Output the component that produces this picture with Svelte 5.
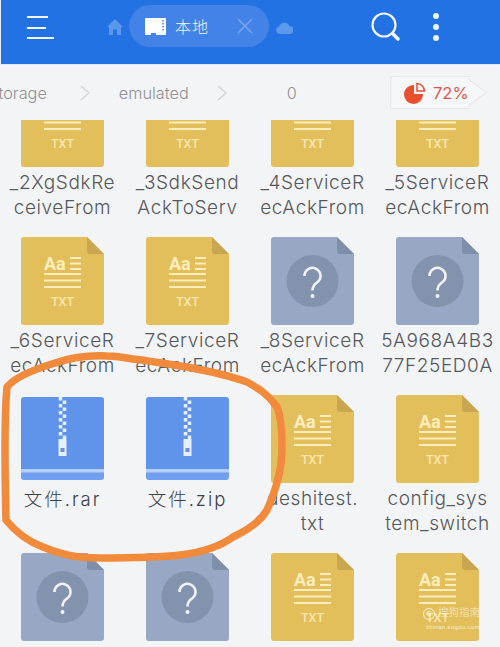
<script>
	const crumbs = ['storage', 'emulated', '0'];

	const rows = [
		[
			{ kind: 'txt', lines: ['_2XgSdkRe', 'ceiveFrom'] },
			{ kind: 'txt', lines: ['_3SdkSend', 'AckToServ'] },
			{ kind: 'txt', lines: ['_4ServiceR', 'ecAckFrom'] },
			{ kind: 'txt', lines: ['_5ServiceR', 'ecAckFrom'] }
		],
		[
			{ kind: 'txt', lines: ['_6ServiceR', 'ecAckFrom'] },
			{ kind: 'txt', lines: ['_7ServiceR', 'ecAckFrom'] },
			{ kind: 'unknown', lines: ['_8ServiceR', 'ecAckFrom'] },
			{ kind: 'unknown', lines: ['5A968A4B3', '77F25ED0A'] }
		],
		[
			{ kind: 'zip', lines: ['文件.rar'] },
			{ kind: 'zip', lines: ['文件.zip'] },
			{ kind: 'txt', lines: ['deshitest.', 'txt'] },
			{ kind: 'txt', lines: ['config_sys', 'tem_switch'] }
		],
		[
			{ kind: 'unknown', lines: [] },
			{ kind: 'unknown', lines: [] },
			{ kind: 'txt', lines: [] },
			{ kind: 'txt', lines: [] }
		]
	];
	const files = rows.flat();
</script>

{#snippet txtIcon()}
	<svg class="file-icon" viewBox="0 0 83 88" aria-hidden="true">
		<path d="M3 0H66L83 17V85a3 3 0 0 1-3 3H3a3 3 0 0 1-3-3V3a3 3 0 0 1 3-3Z" fill="#e3bf5c" />
		<path d="M66 0L83 17H69a3 3 0 0 1-3-3Z" fill="#c9a650" />
		<text x="23" y="33" class="aa">Aa</text>
		<path d="M49 21H60M49 26.500H60M49 32H60M23 37H60M23 43.500H60M23 50H60" stroke="#fbeebc" stroke-width="1.800" />
		<text x="41.500" y="69" class="txt">TXT</text>
	</svg>
{/snippet}

{#snippet unknownIcon()}
	<svg class="file-icon" viewBox="0 0 83 88" aria-hidden="true">
		<path d="M3 0H66L83 17V85a3 3 0 0 1-3 3H3a3 3 0 0 1-3-3V3a3 3 0 0 1 3-3Z" fill="#98a8c4" />
		<path d="M66 0L83 17H69a3 3 0 0 1-3-3Z" fill="#7f8fa9" />
		<circle cx="41.500" cy="44" r="26" fill="#8393ae" />
		<path d="M33.500 39a8 8 0 1 1 12.500 6.500c-3 2-4.500 3.500-4.500 8" fill="none" stroke="#f0f3f8" stroke-width="2.600" />
		<circle cx="41.500" cy="59" r="2" fill="#f0f3f8" />
	</svg>
{/snippet}

{#snippet zipIcon()}
	<svg class="file-icon zip-icon" viewBox="0 0 83 83" aria-hidden="true">
		<path d="M3 0H80a3 3 0 0 1 3 3V73H0V3a3 3 0 0 1 3-3Z" fill="#6093ea" />
		<path d="M0 73H83V80a3 3 0 0 1-3 3H3a3 3 0 0 1-3-3Z" fill="#6f9fee" />
		<rect x="0" y="72" width="83" height="3.500" fill="#b5d0f8" />
		<path d="M39.500 0V42" stroke="#e6effd" stroke-width="3.500" stroke-dasharray="3.500 3.500" />
		<path d="M43.500 3.500V42" stroke="#e6effd" stroke-width="3.500" stroke-dasharray="3.500 3.500" />
		<rect x="37.500" y="42" width="8" height="17" fill="#e6effd" />
		<rect x="39.500" y="51" width="4" height="4" fill="#6f8fd0" />
	</svg>
{/snippet}

<div class="screen">
	<header class="topbar">
		<svg class="menu" viewBox="0 0 28 24" aria-hidden="true">
			<path d="M1 2H22M1 13H20M1 23H28" stroke="#f2f6fe" stroke-width="2" />
		</svg>
		<svg class="home" viewBox="0 0 16 16" aria-hidden="true">
			<path d="M8 0L16 8H14V16H10V10.500H6V16H2V8H0Z" fill="#5c98ec" />
		</svg>
		<div class="tab">
			<svg class="sd" viewBox="0 0 21 17" aria-hidden="true">
				<path d="M1 0H20a1 1 0 0 1 1 1V16a1 1 0 0 1-1 1H11V15H6V17H1a1 1 0 0 1-1-1V1a1 1 0 0 1 1-1Z" fill="#fff" />
				<path d="M18 2V14" stroke="#4382e6" stroke-width="1.500" stroke-dasharray="1.500 1.500" />
			</svg>
			<span class="tab-label">本地</span>
			<svg class="close" viewBox="0 0 16 16" aria-hidden="true">
				<path d="M1 1L15 15M15 1L1 15" stroke="#77a5ef" stroke-width="1.500" />
			</svg>
		</div>
		<svg class="cloud" viewBox="0 0 17 13" aria-hidden="true">
			<path d="M4 13a3.800 3.800 0 0 1-.8-7.500A5.500 5.500 0 0 1 13.500 5a4 4 0 0 1-.2 8Z" fill="#5c98ec" />
		</svg>
		<svg class="search" viewBox="0 0 30 30" aria-hidden="true">
			<circle cx="13" cy="13" r="11.500" fill="none" stroke="#f2f6fe" stroke-width="2.200" />
			<path d="M21.500 21.500L27 27" stroke="#f2f6fe" stroke-width="3.500" stroke-linecap="round" />
		</svg>
		<div class="dots"><i></i><i></i><i></i></div>
	</header>

	<nav class="pathbar">
		<div class="crumbs">
			{#each crumbs as crumb, i}
				{#if i > 0}
					<svg class="chevron" viewBox="0 0 10 16" aria-hidden="true">
						<path d="M1 1L9 8L1 15" fill="none" stroke="#d4d6d9" stroke-width="1.500" />
					</svg>
				{/if}
				<span class="crumb">{crumb}</span>
			{/each}
		</div>
		<div class="usage">
			<svg class="pie" viewBox="0 0 22 22" aria-hidden="true">
				<path d="M10 3V12H19A9.500 9.500 0 1 1 10 3Z" fill="#e8502f" />
				<path d="M13 1.500A8 8 0 0 1 20.500 9H13Z" fill="none" stroke="#e8502f" stroke-width="1.500" />
			</svg>
			<span>72%</span>
		</div>
	</nav>

	<main class="files">
		<div class="grid">
			{#each files as file}
				<div class="tile">
					{#if file.kind === 'txt'}
						{@render txtIcon()}
					{:else if file.kind === 'zip'}
						{@render zipIcon()}
					{:else}
						{@render unknownIcon()}
					{/if}
					<div class="label" class:zip={file.kind === 'zip'}>
						{#each file.lines as line}
							<div>{line}</div>
						{/each}
					</div>
				</div>
			{/each}
		</div>

		<div class="watermark">
			<span class="wm-top"><b>S</b>搜狗指南</span>
			<span class="wm-url">zhinan.sogou.com</span>
		</div>
	</main>

	<svg class="scribble" viewBox="0 0 500 647" aria-hidden="true">
		<path
			d="M107 356C85 355 70 358 55 363C35 369 15 377 7 387C4 420 5 480 6 520C18 535 32 543 43 547C60 554 75 558 100 558C130 558 155 558 180 555C205 552 222 545 233 537C248 530 260 522 267 510C276 490 282 470 282 448C282 430 281 417 277 407C268 394 258 388 247 382C228 375 208 371 187 367C165 364 145 360 133 359C122 357 115 356 107 356Z"
			fill="none"
			stroke="#f28a3c"
			stroke-width="7.500"
			stroke-linejoin="round"
		/>
	</svg>
</div>

<style>
	:global(body) {
		margin: 0;
		background: #f3f4f6;
	}

	.screen {
		position: relative;
		width: 500px;
		height: 647px;
		overflow: hidden;
		font-family: "Inter", "Noto Sans CJK SC", sans-serif;
	}

	.topbar {
		display: flex;
		align-items: center;
		height: 65px;
		padding-left: 26px;
		box-sizing: border-box;
		background: #2272e4;
		border-left: 1px solid #e8eef8;
		border-bottom: 1px solid #dce8f6;
	}

	.menu {
		width: 28px;
		height: 24px;
		margin: -11px 0 0 -1px;
	}

	.home {
		width: 16px;
		height: 16px;
		margin: -10px 0 0 53px;
	}

	.tab {
		display: flex;
		align-items: center;
		width: 140px;
		height: 42px;
		margin: -12px 0 0 6px;
		padding-left: 16px;
		box-sizing: border-box;
		border-radius: 21px;
		background: #4382e6;
	}

	.sd {
		width: 21px;
		height: 17px;
	}

	.tab-label {
		margin-left: 9px;
		font-size: 16px;
		letter-spacing: 1px;
		color: #f4f7fd;
		font-family: "Noto Sans CJK SC", sans-serif;
		font-weight: 300;
	}

	.close {
		width: 16px;
		height: 16px;
		margin-left: 28px;
	}

	.cloud {
		width: 17px;
		height: 13px;
		margin: -10px 0 0 7px;
	}

	.search {
		width: 30px;
		height: 30px;
		margin: -11px 0 0 78px;
	}

	.dots {
		display: flex;
		flex-direction: column;
		gap: 5px;
		margin: -11px 0 0 32px;
	}

	.dots i {
		display: block;
		width: 6px;
		height: 6px;
		border-radius: 50%;
		background: #eef4fd;
	}

	.pathbar {
		display: flex;
		align-items: center;
		justify-content: space-between;
		height: 55px;
		padding-right: 30px;
		overflow: hidden;
		background: #f3f4f6;
	}

	.crumbs {
		display: flex;
		align-items: center;
		margin-left: -10px;
		font-size: 16.300px;
		font-weight: 300;
		color: #8f9193;
	}

	.chevron {
		width: 10px;
		height: 16px;
		margin: 0 29px 0 33px;
	}

	.crumbs .chevron:nth-of-type(2) {
		margin-left: 28px;
	}

	.crumbs .crumb:last-child {
		margin-left: 31px;
	}

	.usage {
		display: flex;
		align-items: center;
		gap: 7px;
		position: relative;
		width: 80px;
		height: 33px;
		padding-left: 13px;
		box-sizing: border-box;
		border: 1px solid #e6e7e9;
		border-right: 0;
		border-radius: 3px 0 0 3px;
		font-size: 16.500px;
		color: #d6574a;
		background: #f6f7f8;
	}

	.usage::after {
		content: '';
		position: absolute;
		right: -10px;
		top: 4px;
		width: 22px;
		height: 22px;
		transform: rotate(45deg) skew(-8deg, -8deg);
		border-top: 1px solid #e6e7e9;
		border-right: 1px solid #e6e7e9;
		background: #f6f7f8;
		z-index: 0;
	}

	.usage > * {
		position: relative;
		z-index: 1;
	}

	.pie {
		width: 22px;
		height: 22px;
		flex: none;
	}

	.files {
		position: relative;
		height: 527px;
		overflow: hidden;
	}

	.grid {
		display: grid;
		grid-template-columns: repeat(4, 125px);
		grid-auto-rows: 158px;
		margin-top: -41px;
	}

	.tile {
		display: flex;
		flex-direction: column;
		align-items: center;
	}

	.file-icon {
		display: block;
		width: 83px;
		flex: none;
	}

	.zip-icon {
		margin-top: 2px;
	}

	.label {
		margin-top: 3px;
		font-size: 19px;
		font-weight: 300;
		line-height: 25px;
		letter-spacing: 0.6px;
		color: #55585c;
		text-align: center;
		white-space: nowrap;
	}

	.label.zip {
		margin-top: 7px;
		font-size: 18.500px;
		letter-spacing: 2px;
		color: #3f4245;
	}

	.aa {
		font: 700 18px "Roboto", sans-serif;
		fill: #fbeebc;
	}

	.txt {
		font: 500 12.500px "Roboto", sans-serif;
		fill: #f8e6ab;
		text-anchor: middle;
	}

	.watermark {
		position: absolute;
		right: 20px;
		bottom: 17px;
		display: flex;
		flex-direction: column;
		align-items: flex-end;
		color: rgba(255, 255, 255, 0.7);
	}

	.wm-top {
		font: 300 10.500px "Noto Sans CJK SC", sans-serif;
		line-height: 14px;
		white-space: nowrap;
	}

	.wm-top b {
		display: inline-block;
		width: 10px;
		height: 10px;
		margin-right: 3px;
		border: 1.500px solid rgba(255, 255, 255, 0.8);
		border-radius: 50%;
		font: 700 8px/10px "Roboto", sans-serif;
		text-align: center;
	}

	.wm-url {
		font: 400 6px "Roboto", sans-serif;
		letter-spacing: 0.3px;
		margin-top: 3px;
	}

	.scribble {
		position: absolute;
		inset: 0;
		width: 500px;
		height: 647px;
		pointer-events: none;
	}
</style>
